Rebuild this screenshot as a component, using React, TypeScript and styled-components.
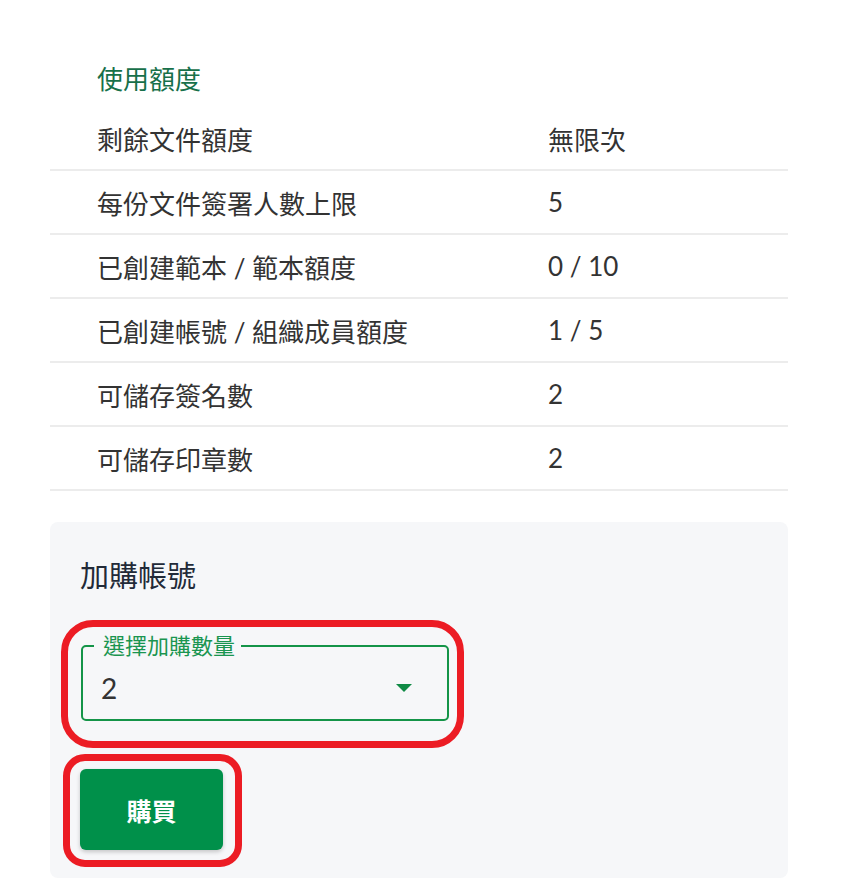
import React from "react";
import styled, { createGlobalStyle } from "styled-components";

const GlobalStyle = createGlobalStyle`
  html, body {
    margin: 0;
    padding: 0;
    background: #ffffff;
  }
  body {
    font-family: "Lato", "Noto Sans CJK TC", sans-serif;
    color: #333333;
  }
`;

const Page = styled.div`
  width: 738px;
  margin-left: 50px;
  padding-top: 47px;
  padding-bottom: 13px;
`;

const Table = styled.div`
  display: flex;
  flex-direction: column;
`;

const HeaderRow = styled.div`
  height: 60px;
  display: flex;
  align-items: center;
  padding-left: 47px;
  font-size: 26px;
  color: #17704a;
`;

const Row = styled.div`
  box-sizing: border-box;
  height: 64px;
  display: grid;
  grid-template-columns: 451px 1fr;
  align-items: center;
  padding-left: 47px;
  border-bottom: 2px solid #ececec;
  font-size: 26px;
  color: #333333;
`;

const Cell = styled.span`
  white-space: nowrap;
`;

const Panel = styled.section`
  margin-top: 31px;
  background: #f6f7f9;
  border-radius: 8px;
  padding: 30px 30px 28px 30px;
  display: flex;
  flex-direction: column;
  align-items: flex-start;
`;

const PanelTitle = styled.h2`
  margin: 0;
  font-size: 29px;
  font-weight: 400;
  line-height: 48px;
  color: #222a38;
`;

const Highlight = styled.div<{ $t: number; $r: number; $b: number; $l: number; $radius: number }>`
  position: relative;
  &::after {
    content: "";
    position: absolute;
    top: ${(p) => p.$t}px;
    right: ${(p) => p.$r}px;
    bottom: ${(p) => p.$b}px;
    left: ${(p) => p.$l}px;
    border: 7px solid #ec1c24;
    border-radius: ${(p) => p.$radius}px;
    pointer-events: none;
  }
`;

const SelectBox = styled.fieldset`
  box-sizing: border-box;
  width: 368px;
  margin: 0 0 0 1px;
  padding: 0 0 0 11px;
  min-width: 0;
  border: 2px solid #149448;
  border-radius: 5px;
`;

const SelectLabel = styled.legend`
  padding: 0 6px 0 9px;
  font-size: 22px;
  line-height: 22px;
  color: #1a9550;
`;

const SelectInner = styled.div`
  height: 62px;
  display: flex;
  align-items: center;
  justify-content: space-between;
  padding-left: 7px;
  padding-right: 35px;
`;

const SelectValue = styled.span`
  font-size: 28px;
  color: #333333;
`;

const Arrow = styled.svg`
  width: 16px;
  height: 8px;
  display: block;
`;

const SelectWrap = styled(Highlight)`
  margin-top: 35px;
`;

const ButtonWrap = styled(Highlight)`
  margin-top: 48px;
`;

const BuyButton = styled.button`
  width: 143px;
  height: 81px;
  border: none;
  border-radius: 6px;
  background: #00904a;
  color: #ffffff;
  font-family: "Lato", "Noto Sans CJK TC", sans-serif;
  font-size: 25px;
  font-weight: 700;
  box-shadow: 0 2px 4px rgba(0, 0, 0, 0.2);
  cursor: pointer;
`;

const rows: [string, string][] = [
  ["剩餘文件額度", "無限次"],
  ["每份文件簽署人數上限", "5"],
  ["已創建範本 / 範本額度", "0 / 10"],
  ["已創建帳號 / 組織成員額度", "1 / 5"],
  ["可儲存簽名數", "2"],
  ["可儲存印章數", "2"],
];

export default function App() {
  return (
    <>
      <GlobalStyle />
      <Page>
        <Table>
          <HeaderRow>使用額度</HeaderRow>
          {rows.map(([label, value]) => (
            <Row key={label}>
              <Cell>{label}</Cell>
              <Cell>{value}</Cell>
            </Row>
          ))}
        </Table>
        <Panel>
          <PanelTitle>加購帳號</PanelTitle>
          <SelectWrap $t={-15} $r={-15} $b={-27} $l={-19} $radius={32}>
            <SelectBox>
              <SelectLabel>選擇加購數量</SelectLabel>
              <SelectInner>
                <SelectValue>2</SelectValue>
                <Arrow viewBox="0 0 16 8">
                  <path d="M0 0 L16 0 L8 8 Z" fill="#0f8a45" />
                </Arrow>
              </SelectInner>
            </SelectBox>
          </SelectWrap>
          <ButtonWrap $t={-15} $r={-19} $b={-17} $l={-17} $radius={22}>
            <BuyButton>購買</BuyButton>
          </ButtonWrap>
        </Panel>
      </Page>
    </>
  );
}
